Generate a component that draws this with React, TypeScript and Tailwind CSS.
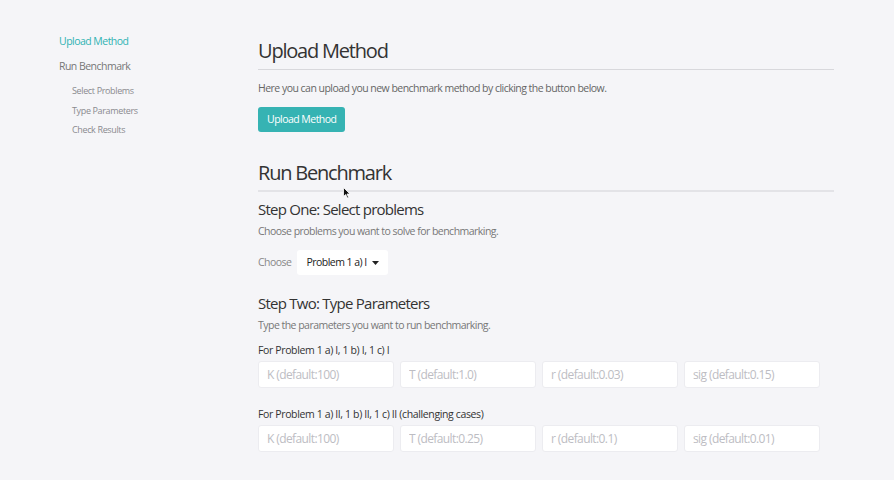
import React from 'react'

const font = { fontFamily: '"Open Sans", "Noto Sans", sans-serif' }

const ParamRow = ({ label, fields }: { label: string; fields: string[] }) => (
  <div>
    <p className="text-[10.5px] tracking-[-0.035em] text-[#333] leading-[14px]">{label}</p>
    <div className="mt-[4px] flex gap-[6px]">
      {fields.map((f) => (
        <input
          key={f}
          placeholder={f}
          className="w-[136px] h-[27px] bg-white border border-[#ececf0] rounded-[3px] px-[8px] text-[12px] tracking-[-0.05em] placeholder:text-[#bdbdc3] outline-none"
        />
      ))}
    </div>
  </div>
)

export default function App() {
  return (
    <div className="relative min-h-[480px] w-[894px] bg-[#f5f5f8] flex" style={font}>
      {/* Sidebar */}
      <nav className="w-[258px] pl-[59px] pt-[34px] shrink-0">
        <a className="block text-[10.5px] tracking-[-0.05em] leading-[14px] text-[#2fb3b3]">Upload Method</a>
        <a className="block mt-[11px] text-[10.5px] tracking-[-0.05em] leading-[14px] text-[#777]">Run Benchmark</a>
        <div className="pl-[13px] mt-[12px] flex flex-col gap-[7.5px]">
          <a className="block text-[9px] tracking-[-0.04em] leading-[12px] text-[#8a8a8f]">Select Problems</a>
          <a className="block text-[9px] tracking-[-0.04em] leading-[12px] text-[#8a8a8f]">Type Parameters</a>
          <a className="block text-[9px] tracking-[-0.04em] leading-[12px] text-[#8a8a8f]">Check Results</a>
        </div>
      </nav>

      {/* Main */}
      <main className="w-[576px] pt-[38px]">
        <h1 className="text-[20px] tracking-[-0.06em] leading-[26px] text-[#333]">Upload Method</h1>
        <hr className="mt-[5px] border-t border-[#d8d8dc]" />
        <p className="mt-[11px] text-[10.5px] tracking-[-0.05em] leading-[14px] text-[#666]">
          Here you can upload you new benchmark method by clicking the button below.
        </p>
        <button className="mt-[12px] h-[25px] px-[9px] rounded-[3px] bg-[#36b3b3] text-white text-[10.5px] tracking-[-0.05em]">
          Upload Method
        </button>

        <h1 className="mt-[28px] text-[20px] tracking-[-0.06em] leading-[26px] text-[#333]">Run Benchmark</h1>
        <hr className="mt-[4px] border-t-2 border-[#e3e3e7]" />
        <h2 className="mt-[7px] text-[15px] tracking-[-0.05em] leading-[20px] text-[#333]">Step One: Select problems</h2>
        <p className="mt-[5px] text-[10.5px] tracking-[-0.05em] leading-[14px] text-[#777]">
          Choose problems you want to solve for benchmarking.
        </p>
        <div className="mt-[12px] flex items-center gap-[6px]">
          <span className="text-[10.5px] tracking-[-0.05em] text-[#888]">Choose</span>
          <button className="h-[25px] px-[9px] rounded-[3px] bg-white text-[10.5px] tracking-[-0.05em] text-[#222] whitespace-nowrap flex items-center gap-[5px]">
            Problem 1 a) I
            <svg width="7" height="4" viewBox="0 0 7 4">
              <path d="M0 0h7L3.5 4z" fill="#222" />
            </svg>
          </button>
        </div>

        <h2 className="mt-[18px] text-[15px] tracking-[-0.05em] leading-[20px] text-[#333]">Step Two: Type Parameters</h2>
        <p className="mt-[5px] text-[10.5px] tracking-[-0.05em] leading-[14px] text-[#777]">
          Type the parameters you want to run benchmarking.
        </p>
        <div className="mt-[11px]">
          <ParamRow
            label="For Problem 1 a) I, 1 b) I, 1 c) I"
            fields={['K (default:100)', 'T (default:1.0)', 'r (default:0.03)', 'sig (default:0.15)']}
          />
        </div>
        <div className="mt-[19px]">
          <ParamRow
            label="For Problem 1 a) II, 1 b) II, 1 c) II (challenging cases)"
            fields={['K (default:100)', 'T (default:0.25)', 'r (default:0.1)', 'sig (default:0.01)']}
          />
        </div>
      </main>

      {/* mouse cursor */}
      <svg className="absolute left-[343px] top-[187px]" width="8" height="12" viewBox="0 0 8 12">
        <path d="M0.5 0.5v9l2.2-2 1.6 3.5 1.3-.6-1.6-3.4h3z" fill="#111" stroke="#fff" strokeWidth="0.8" />
      </svg>
    </div>
  )
}
